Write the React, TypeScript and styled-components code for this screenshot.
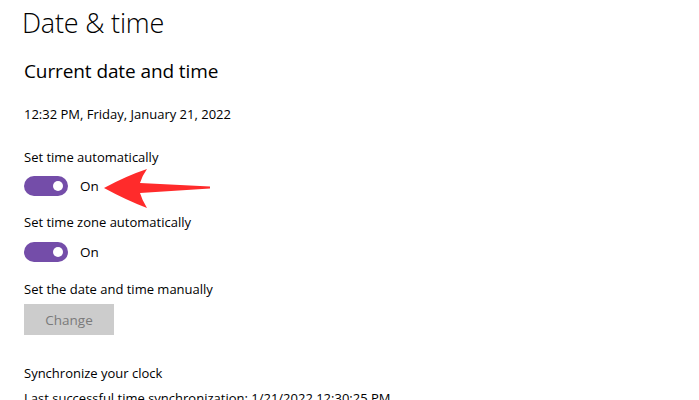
import React from "react";
import styled, { createGlobalStyle } from "styled-components";

const Global = createGlobalStyle`
  html, body { margin: 0; padding: 0; background: #ffffff; }
  body { font-family: "Open Sans", "Noto Sans", sans-serif; color: #000; overflow: hidden; }
`;

const Page = styled.div`
  position: relative;
  width: 699px;
  height: 400px;
  overflow: hidden;
  padding: 0 24px;
  box-sizing: border-box;
`;

const Title = styled.h1`
  margin: 0 0 0 -2px;
  padding-top: 4px;
  font-size: 27px;
  font-weight: 300;
  letter-spacing: -0.2px;
  line-height: 38px;
`;

const Subtitle = styled.h2`
  margin: 16px 0 0 0;
  font-size: 19px;
  font-weight: 400;
  letter-spacing: -0.1px;
  line-height: 26px;
`;

const Text = styled.p<{ $top: number }>`
  margin: ${(p) => p.$top}px 0 0 0;
  font-size: 13px;
  line-height: 19px;
  white-space: nowrap;
`;

const ToggleRow = styled.div<{ $top: number }>`
  display: flex;
  align-items: center;
  gap: 12px;
  margin-top: ${(p) => p.$top}px;
  height: 20px;
`;

const Track = styled.div<{ $on: boolean }>`
  position: relative;
  width: 44px;
  height: 20px;
  border-radius: 10px;
  background: ${(p) => (p.$on ? "#744da9" : "#ffffff")};
  box-sizing: border-box;
`;

const Knob = styled.div`
  position: absolute;
  top: 5px;
  right: 5px;
  width: 10px;
  height: 10px;
  border-radius: 50%;
  background: #ffffff;
`;

const ToggleLabel = styled.span`
  font-size: 13.5px;
  line-height: 19px;
`;

const Button = styled.button`
  display: block;
  margin-top: 5px;
  width: 90px;
  height: 31px;
  border: none;
  background: #cccccc;
  color: #7a7a7a;
  font-family: inherit;
  font-size: 13.5px;
  padding: 0;
`;

const Arrow = styled.svg`
  position: absolute;
  left: 100px;
  top: 165px;
`;

function Toggle({ on, top }: { on: boolean; top: number }) {
  return (
    <ToggleRow $top={top}>
      <Track $on={on}>
        <Knob />
      </Track>
      <ToggleLabel>{on ? "On" : "Off"}</ToggleLabel>
    </ToggleRow>
  );
}

export default function App() {
  return (
    <>
      <Global />
      <Page>
        <Title>Date &amp; time</Title>
        <Subtitle>Current date and time</Subtitle>
        <Text $top={21}>12:32 PM, Friday, January 21, 2022</Text>
        <Text $top={24}>Set time automatically</Text>
        <Toggle on top={9} />
        <Text $top={17}>Set time zone automatically</Text>
        <Toggle on top={10} />
        <Text $top={18}>Set the date and time manually</Text>
        <Button>Change</Button>
        <Text $top={29}>Synchronize your clock</Text>
        <Text $top={6}>Last successful time synchronization: 1/21/2022 12:30:25 PM</Text>
        <Arrow width="115" height="45" viewBox="100 165 115 45">
          <path
            d="M104 188 Q126 176 147 169 Q142 176 140 183 L210 186.5 L210 188.5 L140 193 Q142 200 147 208 Q126 200 104 188 Z"
            fill="#ff2b2b"
          />
        </Arrow>
      </Page>
    </>
  );
}
